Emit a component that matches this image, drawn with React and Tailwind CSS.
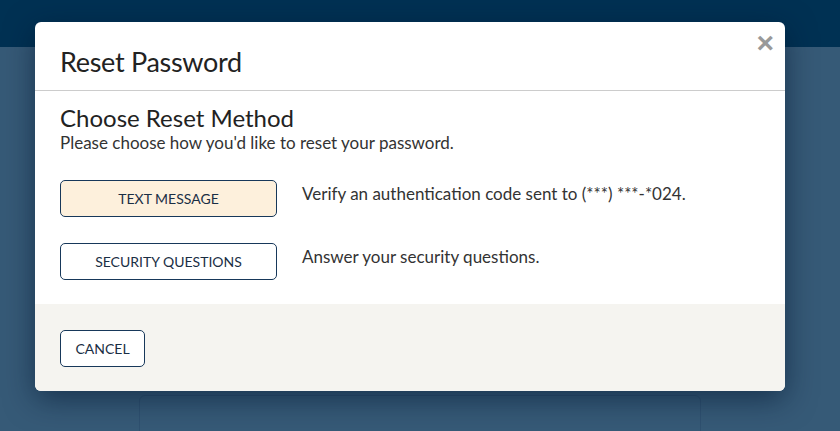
import React from 'react';

const ResetModal = () => {
  return (
    <div className="absolute left-[35px] top-[22px] w-[750px] rounded-md bg-white shadow-[0_8px_30px_rgba(0,20,45,0.55)] overflow-hidden">
      <div className="relative h-[69px] border-b border-[#cccccc] px-[25px] pt-[24px]">
        <h1 className="text-[27px] leading-[32px] text-[#222] font-['Lato',sans-serif] tracking-[-0.3px]">Reset Password</h1>
        <button className="absolute right-[11px] top-[6px] text-[30px] leading-[30px] font-bold text-[#999] font-['Liberation_Sans',sans-serif]">×</button>
      </div>
      <div className="px-[25px] pt-[13px] pb-[24px] font-['Lato',sans-serif]">
        <h2 className="text-[24px] leading-[28px] text-[#222]">Choose Reset Method</h2>
        <p className="text-[17px] leading-[21px] text-[#333]">Please choose how you'd like to reset your password.</p>
        <div className="mt-[27px] flex flex-col gap-[26px]">
          <div className="flex items-center gap-[25px]">
            <button className="h-[37px] w-[217px] rounded-[5px] border border-[#17385a] bg-[#fdf0dc] text-[14px] text-[#1a2e44]">TEXT MESSAGE</button>
            <span className="text-[17px] text-[#333] -mt-[10px]">Verify an authentication code sent to (***) ***-*024.</span>
          </div>
          <div className="flex items-center gap-[25px]">
            <button className="h-[37px] w-[217px] rounded-[5px] border border-[#17385a] bg-white text-[14px] text-[#1a2e44]">SECURITY QUESTIONS</button>
            <span className="text-[17px] text-[#333] -mt-[10px]">Answer your security questions.</span>
          </div>
        </div>
      </div>
      <div className="h-[87px] bg-[#f5f4f0] px-[25px] pt-[26px] font-['Lato',sans-serif]">
        <button className="h-[37px] w-[85px] rounded-[5px] border border-[#17385a] bg-white text-[14px] text-[#1a2e44]">CANCEL</button>
      </div>
    </div>
  );
};

export default function App() {
  return (
    <div className="relative h-[431px] w-[840px] overflow-hidden bg-[#365a77]">
      <div className="h-[47px] bg-[#003153]" />
      <div className="mx-[139px] mt-[348px] h-[60px] w-[562px] rounded-md border border-[#2f5170]" />
      <ResetModal />
    </div>
  );
}
